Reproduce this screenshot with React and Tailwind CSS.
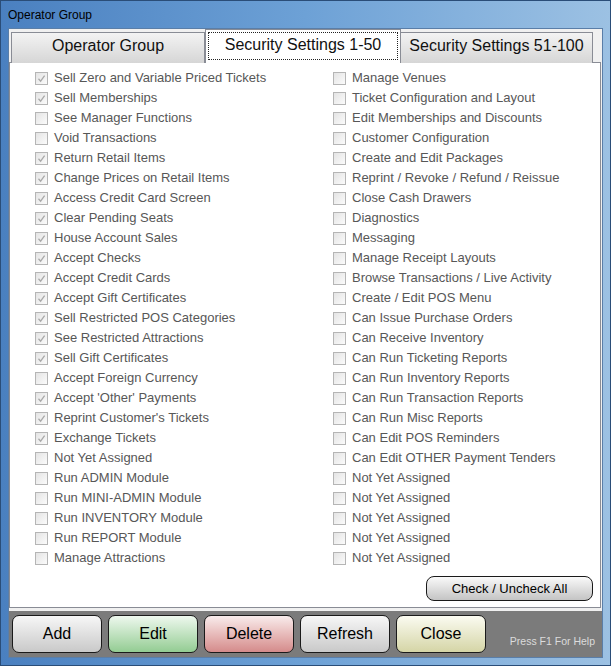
import React from 'react'

const LEFT = [
  ['Sell Zero and Variable Priced Tickets', true],
  ['Sell Memberships', true],
  ['See Manager Functions', false],
  ['Void Transactions', false],
  ['Return Retail Items', true],
  ['Change Prices on Retail Items', true],
  ['Access Credit Card Screen', true],
  ['Clear Pending Seats', true],
  ['House Account Sales', true],
  ['Accept Checks', true],
  ['Accept Credit Cards', true],
  ['Accept Gift Certificates', true],
  ['Sell Restricted POS Categories', true],
  ['See Restricted Attractions', true],
  ['Sell Gift Certificates', true],
  ['Accept Foreign Currency', false],
  ["Accept 'Other' Payments", true],
  ["Reprint Customer's Tickets", true],
  ['Exchange Tickets', true],
  ['Not Yet Assigned', false],
  ['Run ADMIN Module', false],
  ['Run MINI-ADMIN Module', false],
  ['Run INVENTORY Module', false],
  ['Run REPORT Module', false],
  ['Manage Attractions', false],
]

const RIGHT = [
  'Manage Venues',
  'Ticket Configuration and Layout',
  'Edit Memberships and Discounts',
  'Customer Configuration',
  'Create and Edit Packages',
  'Reprint / Revoke / Refund / Reissue',
  'Close Cash Drawers',
  'Diagnostics',
  'Messaging',
  'Manage Receipt Layouts',
  'Browse Transactions / Live Activity',
  'Create / Edit POS Menu',
  'Can Issue Purchase Orders',
  'Can Receive Inventory',
  'Can Run Ticketing Reports',
  'Can Run Inventory Reports',
  'Can Run Transaction Reports',
  'Can Run Misc Reports',
  'Can Edit POS Reminders',
  'Can Edit OTHER Payment Tenders',
  'Not Yet Assigned',
  'Not Yet Assigned',
  'Not Yet Assigned',
  'Not Yet Assigned',
  'Not Yet Assigned',
]

function CheckRow({ label, checked }) {
  return (
    <div className="flex items-center h-[20px]">
      <span className="w-[13px] h-[13px] border border-[#b5b5b5] bg-gradient-to-br from-[#e4e4e4] to-[#fbfbfb] flex items-center justify-center shrink-0">
        {checked && (
          <svg width="11" height="11" viewBox="0 0 11 11">
            <path d="M2.5 5.8 L4.6 8.2 L8.6 2.6" fill="none" stroke="#a9a9a9" strokeWidth="1.3" />
          </svg>
        )}
      </span>
      <span className="ml-[6px] text-[13px] text-[#575757] whitespace-nowrap">{label}</span>
    </div>
  )
}

function Btn({ label, tone }) {
  const tones = {
    gray: 'from-[#f7f7f7] to-[#c9c9c9]',
    green: 'from-[#eef8ee] to-[#93cc93]',
    red: 'from-[#f8ecec] to-[#d48b8b]',
    yellow: 'from-[#fbfbf1] to-[#d5d5a6]',
  }
  return (
    <button
      className={[
        'w-[90px] h-[38px] rounded-[7px] border border-[#1a1a1a] bg-gradient-to-b text-[16px] text-black',
        tones[tone],
      ].join(' ')}
    >
      {label}
    </button>
  )
}

export default function App() {
  return (
    <div
      className="w-[611px] h-[666px] flex flex-col border border-[#2a4d78] bg-gradient-to-r from-[#4a80c0] via-[#6da1d6] to-[#9cc1e3]"
      style={{ fontFamily: '"Liberation Sans", Arial, sans-serif' }}
    >
      {/* Title bar */}
      <div className="h-[27px] flex items-center pl-[7px] text-[12px] text-black">Operator Group</div>

      {/* Client area */}
      <div className="mx-[7px] flex-1 flex flex-col border border-[#5a7ea8]">
        <div className="flex-1 bg-[#f0f0f0] flex flex-col pb-[3px]">
          {/* Tabs */}
          <div className="flex items-end h-[33px] pl-[2px] relative z-10">
            <div className="w-[194px] h-[31px] -mb-px pb-[4px] border border-[#898c95] border-b-0 bg-gradient-to-b from-[#f3f3f3] to-[#d6d6d6] flex items-center justify-center text-[16px] text-[#111]">
              Operator Group
            </div>
            <div className="w-[196px] h-[34px] -mb-px border border-[#898c95] border-b-0 bg-white p-[2px] pb-[3px] flex">
              <div className="flex-1 pb-[3px] border border-dotted border-[#222] flex items-center justify-center text-[16px] text-[#111]">
                Security Settings 1-50
              </div>
            </div>
            <div className="w-[192px] h-[31px] -mb-px pb-[4px] border border-[#898c95] border-l-0 border-b-0 bg-gradient-to-b from-[#f3f3f3] to-[#d6d6d6] flex items-center justify-center text-[16px] text-[#111]">
              Security Settings 51-100
            </div>
          </div>

          {/* Panel */}
          <div className="flex-1 ml-0 mr-[1px] border border-[#898c95] bg-white flex flex-col pt-[5px] pb-[6px] pr-[7px]">
            <div className="flex">
              <div className="w-[323px] pl-[25px] flex flex-col">
                {LEFT.map(([l, c], i) => (
                  <CheckRow key={i} label={l} checked={c} />
                ))}
              </div>
              <div className="flex flex-col">
                {RIGHT.map((l, i) => (
                  <CheckRow key={i} label={l} checked={false} />
                ))}
              </div>
            </div>
            <div className="flex justify-end mt-auto">
              <button className="w-[167px] h-[25px] rounded-[8px] border border-[#1a1a1a] bg-gradient-to-b from-[#fafafa] to-[#c4c4c4] text-[13px] text-black">
                Check / Uncheck All
              </button>
            </div>
          </div>
        </div>

        {/* Bottom bar */}
        <div className="h-[46px] bg-[#7b7b7b] flex items-center pl-[3px] gap-[6px]">
          <Btn label="Add" tone="gray" />
          <Btn label="Edit" tone="green" />
          <Btn label="Delete" tone="red" />
          <Btn label="Refresh" tone="gray" />
          <Btn label="Close" tone="yellow" />
          <span className="ml-auto mr-[7px] mt-[16px] text-[10.5px] text-[#dcdcdc]">Press F1 For Help</span>
        </div>
      </div>
      <div className="h-[7px]" />
    </div>
  )
}
